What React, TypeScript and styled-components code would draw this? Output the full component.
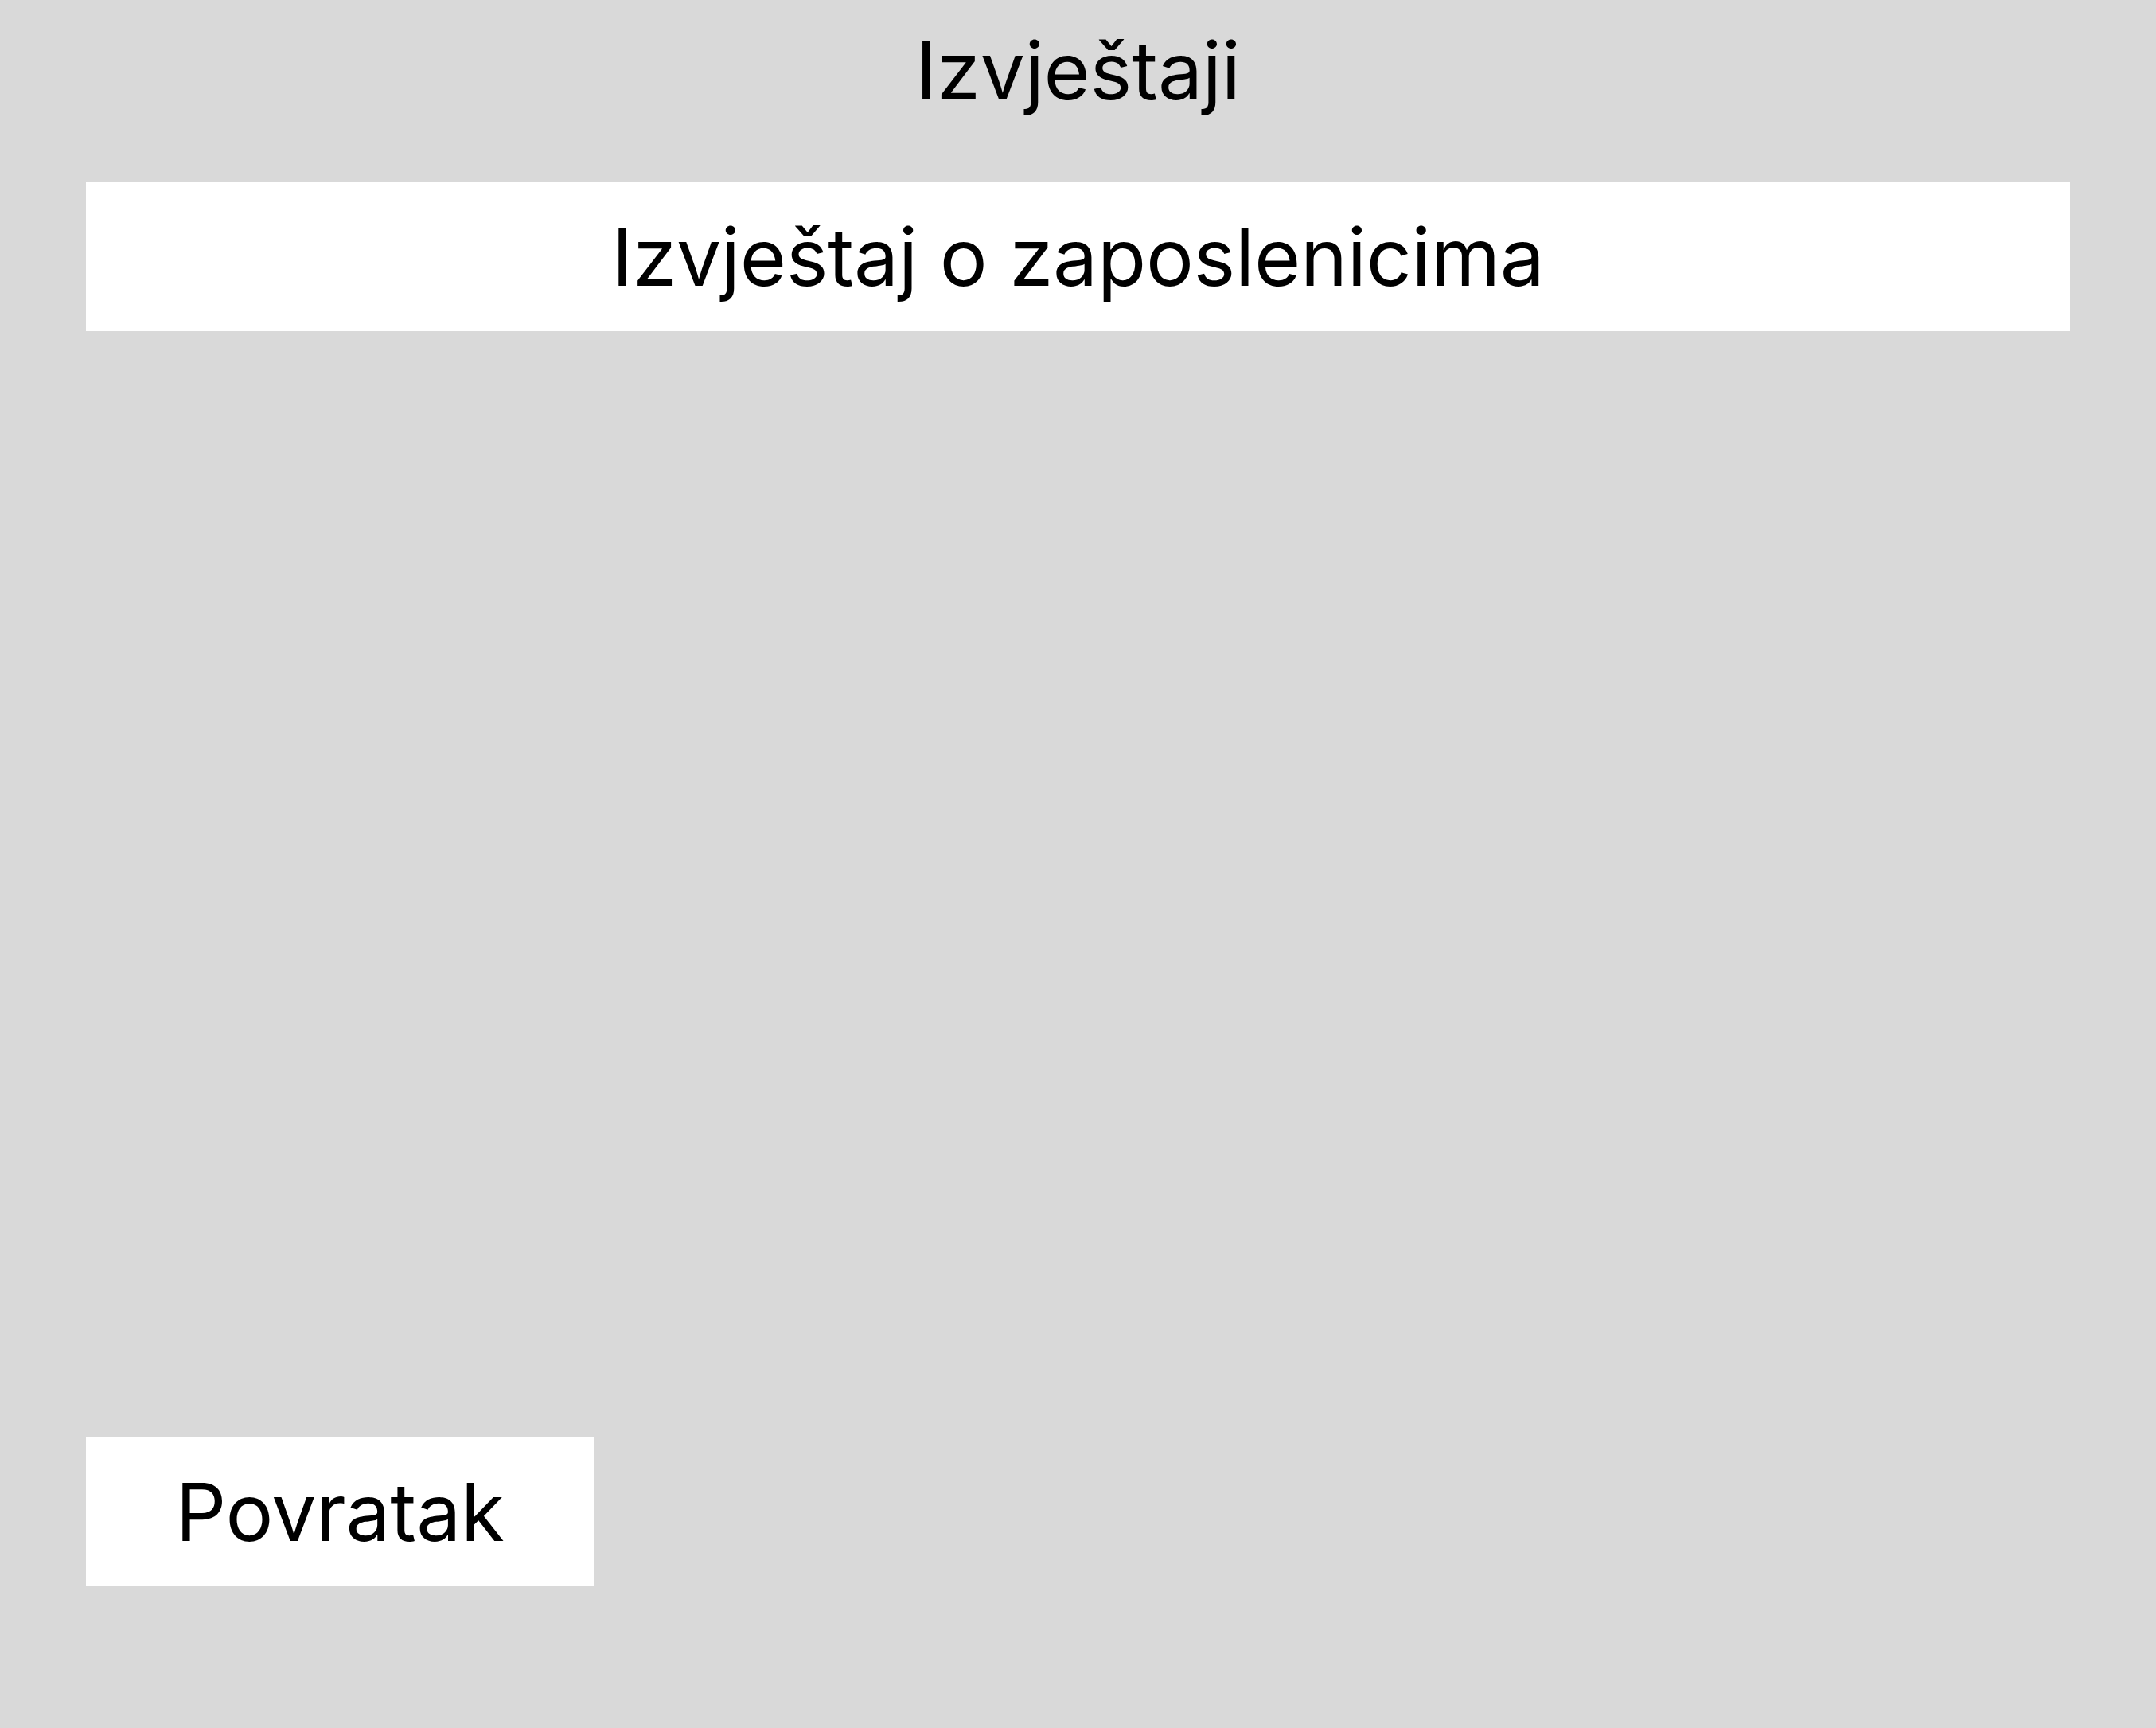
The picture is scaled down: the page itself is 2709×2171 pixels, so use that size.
import React from "react";
import styled, { createGlobalStyle } from "styled-components";

const GlobalStyle = createGlobalStyle`
  html, body {
    margin: 0;
    padding: 0;
    background: #d9d9d9;
  }
  body {
    font-family: Inter, "Noto Sans", sans-serif;
    color: #000;
  }
`;

const reports = ["Izvještaj o zaposlenicima"];

const App = () => {
  return (
    <>
      <GlobalStyle />
      <Page>
        <Title>Izvještaji</Title>
        <ReportList>
          {reports.map((name) => (
            <ReportButton key={name}>{name}</ReportButton>
          ))}
        </ReportList>
        <Footer>
          <BackButton>Povratak</BackButton>
        </Footer>
      </Page>
    </>
  );
};

const Page = styled.div`
  height: 100vh;
  box-sizing: border-box;
  padding: 28px 108px 178px;
  display: flex;
  flex-direction: column;
`;

const Title = styled.h1`
  margin: 0;
  font-size: 100px;
  font-weight: 400;
  line-height: 121px;
  letter-spacing: -0.3px;
  text-align: center;
`;

const ReportList = styled.div`
  flex: 1;
  margin-top: 80px;
  display: flex;
  flex-direction: column;
  gap: 40px;
`;

const ReportButton = styled.button`
  height: 187px;
  width: 100%;
  border: none;
  background: #fff;
  font-family: inherit;
  font-size: 100px;
  letter-spacing: -0.3px;
  color: #000;
  display: flex;
  align-items: center;
  justify-content: center;
  cursor: pointer;
`;

const Footer = styled.div`
  display: flex;
`;

const BackButton = styled(ReportButton)`
  width: 638px;
  height: 188px;
`;

export default App;
